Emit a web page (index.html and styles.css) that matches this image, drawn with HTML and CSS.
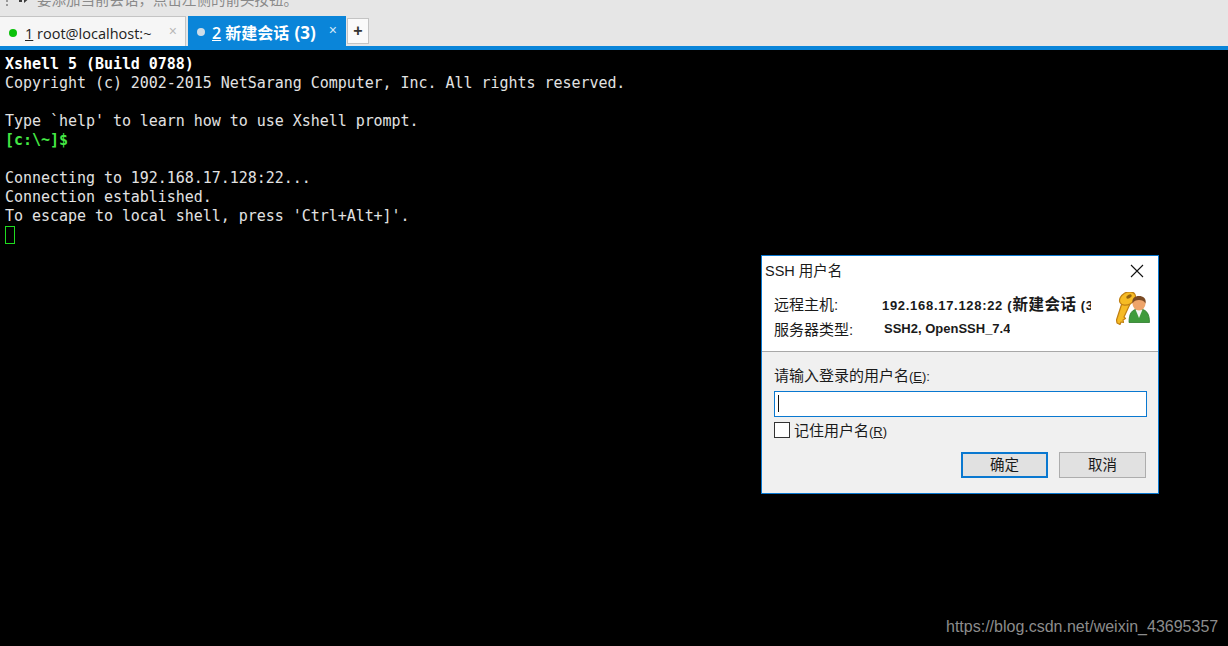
FILE: index.html
```html
<!DOCTYPE html>
<html lang="zh-CN">
<head>
<meta charset="utf-8">
<title>Xshell</title>
<link rel="stylesheet" href="styles.css">
</head>
<body>
<div class="app">
  <header class="topbar">
    <div class="hint">
      <span class="grip"></span>
      <svg class="arrow" width="14" height="12" viewBox="0 0 14 12"><path d="M0 0h3v9H0zM5 0v10l4-3.500h5V0z" fill="#3c3c3c"/></svg>
      <span class="hint-text">要添加当前会话&#xFF0C;点击左侧的箭头按钮。</span>
    </div>
    <div class="tabs">
      <div class="tab tab-inactive">
        <span class="dot dot-green"></span>
        <span class="tab-label"><u>1</u> root@localhost:~</span>
        <span class="tab-close">×</span>
      </div>
      <div class="tab tab-active">
        <span class="dot dot-light"></span>
        <span class="tab-label"><u>2</u> 新建会话 <span class="tab-count">(3)</span></span>
        <span class="tab-close">×</span>
      </div>
      <div class="tab-add">+</div>
    </div>
  </header>
  <main class="terminal">
<pre class="term-text"><b>Xshell 5 (Build 0788)</b>
Copyright (c) 2002-2015 NetSarang Computer, Inc. All rights reserved.

Type `help' to learn how to use Xshell prompt.
<b class="prompt">[c:\~]$</b>

Connecting to 192.168.17.128:22...
Connection established.
To escape to local shell, press 'Ctrl+Alt+]'.
<span class="cursor"></span></pre>
  </main>
</div>

<section class="dialog">
  <div class="dlg-head">
    <div class="dlg-title">
      <span>SSH 用户名</span>
      <svg class="dlg-x" width="14" height="14" viewBox="0 0 14 14"><path d="M1 1l12 12M13 1L1 13" stroke="#111" stroke-width="1.1" fill="none"/></svg>
    </div>
    <div class="dlg-info">
      <div class="info-rows">
        <div class="info-row"><span class="info-key">远程主机:</span><span class="info-val val-host">192.168.17.128:22 (<span class="val-cjk">新建会话</span> (3</span></div>
        <div class="info-row"><span class="info-key">服务器类型:</span><span class="info-val val-type">SSH2, OpenSSH_7.4</span></div>
      </div>
      <svg class="keyuser" width="34" height="34" viewBox="0 0 34 34">
        <g fill="#f6bb24" stroke="#c07f12" stroke-width="1.200" stroke-linejoin="round">
          <path d="M7 8l7 4-6 13 1.500 1.500L7 28l.5 2.500L5 30l-1 2.500L1 31l-.5-3z"/>
          <ellipse cx="11.500" cy="6.500" rx="8.500" ry="6" transform="rotate(-30 11.500 6.500)"/>
        </g>
        <ellipse cx="13" cy="4.500" rx="3" ry="1.700" transform="rotate(-30 13 4.500)" fill="#94630f"/>
        <path d="M13 30.500C13 21 16 17 23 17s10.500 4 10.500 13.500z" fill="#3f9a3c" stroke="#2b7a2a" stroke-width=".8"/>
        <path d="M19.500 17.500l3.500 8.500 3.500-8.500z" fill="#f4f4f4"/>
        <ellipse cx="23" cy="11.500" rx="6.500" ry="7" fill="#eea46a"/>
        <path d="M16.500 11.500C15.500 6 19 4 23 4s7.500 2 6.500 7.500C28 8.500 26 8 23 8s-5 .5-6.500 3.500z" fill="#7a4a24"/>
      </svg>
    </div>
  </div>
  <div class="dlg-body">
    <label class="field-label">请输入登录的用户名<span class="mnemonic">(<u>E</u>):</span></label>
    <div class="input"><span class="caret"></span></div>
    <div class="remember">
      <span class="checkbox"></span>
      <span class="remember-text">记住用户名<span class="mnemonic">(<u>R</u>)</span></span>
    </div>
    <div class="buttons">
      <div class="btn btn-primary">确定</div>
      <div class="btn">取消</div>
    </div>
  </div>
</section>

<div class="watermark">https://blog.csdn.net/weixin_43695357</div>
</body>
</html>
```
FILE: styles.css
```css
* { box-sizing: border-box; }
html, body { margin: 0; padding: 0; height: 100%; overflow: hidden; background: #000; }
body { font-family: "Liberation Sans", "Noto Sans CJK SC", sans-serif; }
.app { display: flex; flex-direction: column; height: 646px; }

.topbar { height: 46px; flex: none; background: #e6e6e6; overflow: hidden; position: relative; }
.hint { display: flex; align-items: center; height: 16px; margin-top: -9px; padding-left: 6px; font: 14.500px/16px "Noto Sans CJK SC", sans-serif; color: #8a8a8a; }
.grip { width: 3px; height: 14px; margin-right: 10px; border-left: 2px dotted #999; }
.arrow { margin-right: 4px; }
.tabs { display: flex; align-items: flex-start; margin-top: 9px; }
.tab { display: flex; align-items: center; height: 30px; position: relative; font: 14.500px/20px "Open Sans", "Noto Sans CJK SC", sans-serif; }
.tab-inactive { width: 186px; background: #f6f6f6; border: 1px solid #c4c4c4; border-bottom: 0; border-left: 0; color: #222; margin-right: 2px; }
.tab-active { width: 158px; background: #0a85d9; color: #fff; font-size: 16px; font-weight: 600; margin-right: 1px; }
.tab-count { font-size: 17px; font-weight: 700; margin-left: 1px; }
.dot { width: 8px; height: 8px; border-radius: 50%; margin: 2px 0 0 9px; flex: none; }
.dot-green { background: #0ac10a; }
.dot-light { background: #cfdde8; }
.tab-label { margin-left: 8px; padding-top: 4px; white-space: nowrap; }
.tab-active .tab-label { margin-left: 7px; }
.tab-close { position: absolute; top: 6px; right: 8px; font: 14px/16px "Liberation Sans", sans-serif; color: #b8b8b8; }
.tab-active .tab-close { color: #d5e9f7; font-weight: 400; right: 9px; }
.tab-add { width: 22px; height: 26px; margin-top: 2px; background: #fafafa; border: 1px solid #c4c4c4; text-align: center; font: 700 16px/23px "Liberation Sans", sans-serif; color: #333; }

.terminal { flex: 1; background: #000; border-top: 4px solid #0a85d9; padding-top: 5px; }
.term-text { margin: 0; padding-left: 5px; font: 15px/19px "DejaVu Sans Mono", monospace; letter-spacing: -.04px; color: #e2e2e2; }
.term-text b { color: #fff; }
.term-text .prompt { color: #44e744; }
.cursor { display: inline-block; width: 10px; height: 18px; border: 1px solid #1fdc1f; vertical-align: top; }

.dialog { position: absolute; left: 761px; top: 255px; width: 398px; height: 239px; border: 1px solid #0a78d0; background: #f0f0f0; color: #1a1a1a; }
.dlg-head { height: 96px; background: #fff; border-bottom: 1px solid #a8a8a8; }
.dlg-title { display: flex; align-items: center; justify-content: space-between; height: 31px; padding: 0 14px 4px 3px; font-size: 14.500px; }
.dlg-x { display: block; margin-top: 2px; }
.dlg-info { display: flex; justify-content: space-between; padding: 7px 8px 0 12px; }
.info-rows { display: flex; flex-direction: column; gap: 7px; }
.info-row { display: flex; height: 18px; align-items: center; font-size: 15px; }
.info-key { width: 108px; flex: none; }
.info-val { font-weight: 700; font-size: 13px; white-space: nowrap; overflow: hidden; }
.val-host { width: 209px; letter-spacing: .7px; }
.val-cjk { font-size: 15.500px; letter-spacing: .5px; }
.val-type { margin-left: 2px; }
.keyuser { flex: none; margin-top: -2px; }

.dlg-body { padding: 15px 11px 0 12px; font-size: 15px; }
.mnemonic { font-size: 13px; }
.field-label { display: block; height: 19px; line-height: 17px; }
.input { height: 26px; margin-top: 5px; background: #fff; border: 1px solid #0a78d0; padding: 3px 0 0 3px; }
.caret { display: block; width: 1px; height: 17px; background: #111; }
.remember { display: flex; align-items: center; gap: 4px; height: 18px; margin-top: 4px; }
.remember-text { line-height: 16px; padding-top: 2px; }
.checkbox { width: 16px; height: 16px; background: #fff; border: 1px solid #333; }
.buttons { display: flex; justify-content: flex-end; gap: 11px; margin-top: 13px; padding-right: 1px; font-size: 14.500px; }
.btn { width: 87px; height: 26px; line-height: 24px; text-align: center; background: #e1e1e1; border: 1px solid #adadad; }
.btn-primary { border: 2px solid #0a78d0; line-height: 22px; }

.watermark { position: absolute; left: 946px; top: 617px; font-size: 16px; line-height: 20px; color: #8c8c8c; white-space: nowrap; }
```
